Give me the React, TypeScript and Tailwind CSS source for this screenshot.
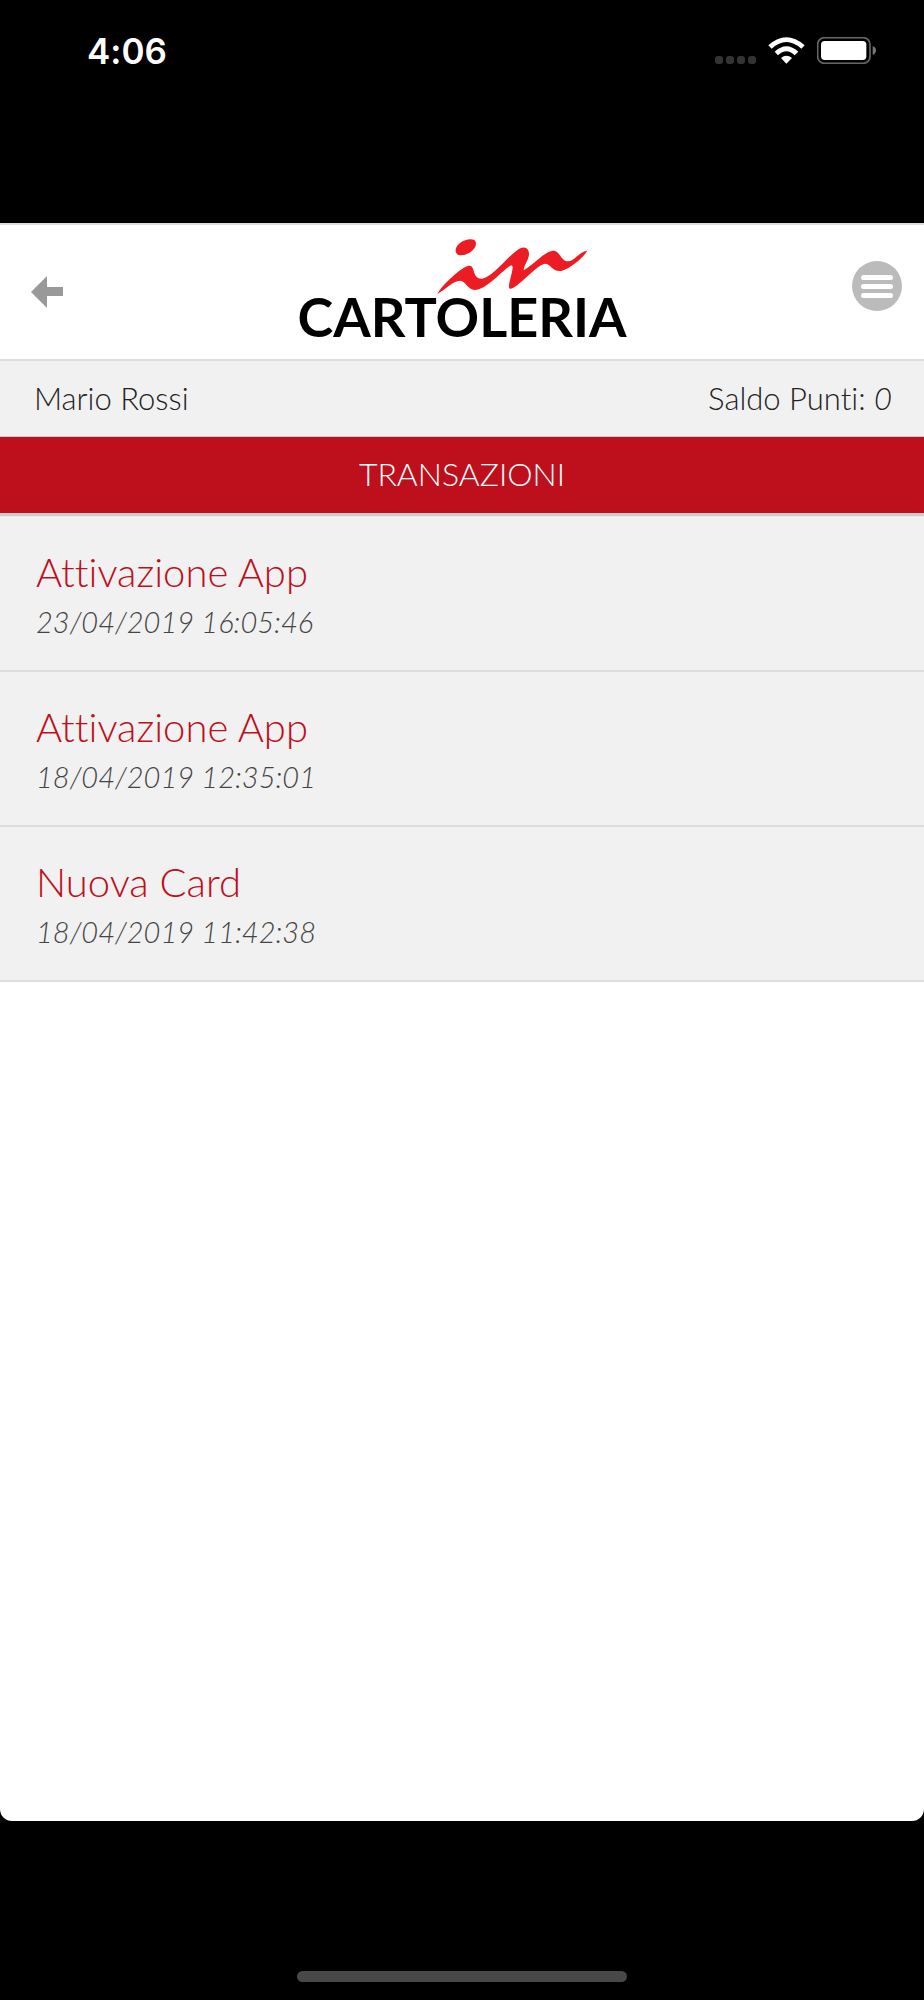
import React from 'react';

interface Transaction {
  id: number;
  title: string;
  date: string;
}

const transactions: Transaction[] = [
  { id: 1, title: 'Attivazione App', date: '23/04/2019 16:05:46' },
  { id: 2, title: 'Attivazione App', date: '18/04/2019 12:35:01' },
  { id: 3, title: 'Nuova Card', date: '18/04/2019 11:42:38' },
];

export default function App() {
  return (
    <div className="flex min-h-screen flex-col bg-black font-['Lato',sans-serif] font-light [font-variant-ligatures:none]">
      <StatusBar />

      <div className="flex flex-1 flex-col overflow-hidden rounded-b-xl bg-white">
        <Header />

        <div className="flex items-center justify-between bg-[#f1f1f1] pt-[15px] pr-8 pb-4 pl-[34px] text-[31px] leading-[44px] text-[#222]">
          <span>Mario Rossi</span>
          <span>
            Saldo Punti: <em>0</em>
          </span>
        </div>

        <h1 className="z-10 border-t border-[#ccc] bg-[#be0f1c] pt-[15px] pb-[17px] text-center text-[32px] leading-[44px] text-white shadow-[0_3px_1px_#ccc]">
          TRANSAZIONI
        </h1>

        <ul className="bg-[#f1f1f1] pt-1">
          {transactions.map((t) => (
            <TransactionRow key={t.id} transaction={t} />
          ))}
        </ul>
      </div>

      <footer className="flex h-[179px] items-end justify-center pb-[18px]">
        <div className="h-[11px] w-[330px] rounded-full bg-[#484848]" />
      </footer>
    </div>
  );
}

function StatusBar() {
  return (
    <div className="flex h-[223px] items-start justify-between pt-7 pr-[47px] pl-[87px]">
      <span className="font-['Inter',sans-serif] text-[35px] leading-[46px] font-semibold text-white">4:06</span>
      <div className="flex items-center gap-3 pt-[9px]">
        {/* No signal */}
        <div className="flex gap-[3px] self-end">
          <i className="size-2 rounded-[3px] bg-[#333]" />
          <i className="size-2 rounded-[3px] bg-[#333]" />
          <i className="size-2 rounded-[3px] bg-[#333]" />
          <i className="size-2 rounded-[3px] bg-[#333]" />
        </div>
        <svg viewBox="0 0 111 81" className="h-[27px] w-[37px] fill-white">
          <path d="M1 25 Q55 -23 110 25 L100 35 Q55 -5 11 35 Z" />
          <path d="M20 44 Q55 11 91 44 L80 55 Q55 31 30 55 Z" />
          <path d="M39 63 Q55 50 72 63 L55 80 Z" />
        </svg>
        <svg viewBox="0 0 180 81" className="h-[27px] w-[60px]">
          <rect x="2" y="2" width="157" height="77" rx="20" fill="none" stroke="#666" strokeWidth="5" />
          <rect x="12" y="12" width="136" height="57" rx="11" fill="#fff" />
          <path d="M167 27 Q177 31 177 40 Q177 50 167 54 Z" fill="#777" />
        </svg>
      </div>
    </div>
  );
}

function Header() {
  return (
    <header className="grid grid-cols-[1fr_auto_1fr] items-center border-y-2 border-[#ddd] bg-white px-[22px]">
      <button type="button" aria-label="Indietro" className="justify-self-start pl-[9px]">
        <svg viewBox="0 0 32 32" className="size-8 fill-[#999]">
          <path d="M0 16 L16 0 V11 H32 V20 H16 V32 Z" />
        </svg>
      </button>

      <Logo />

      <button
        type="button"
        aria-label="Menu"
        className="mt-9 flex size-[50px] flex-col items-center justify-center gap-1 self-start justify-self-end rounded-full bg-[#bbb]"
      >
        <span className="h-[5px] w-8 rounded-full bg-white" />
        <span className="h-[5px] w-8 rounded-full bg-white" />
        <span className="h-[5px] w-8 rounded-full bg-white" />
      </button>
    </header>
  );
}

function Logo() {
  return (
    <div className="flex flex-col items-center pt-3.5 pb-5">
      <svg viewBox="471 72 450 168" className="ml-[100px] h-14 w-[150px] fill-[#ed1c24]">
        <path d="M527 105 C528 88 552 72 573 73 C586 73 590 82 587 92 C581 109 558 122 539 121 C531 119 526 114 527 105 Z" />
        <path d="M472 237 C485 211 545 154 568 152 C586 151 576 192 606 191 C640 188 690 113 723 99 C744 91 752 113 744 131 C739 143 731 155 731 166 C760 150 795 108 820 107 C841 107 842 140 865 139 C885 137 895 112 921 107 C915 125 862 168 840 168 C815 168 812 146 795 146 C770 148 712 222 690 221 C679 219 702 164 697 153 C688 141 625 225 585 225 C560 222 558 198 540 197 C520 197 495 224 472 237 Z" />
      </svg>
      <span className="text-[54px] leading-[44px] font-bold text-black">CARTOLERIA</span>
    </div>
  );
}

function TransactionRow({ transaction }: { transaction: Transaction }) {
  return (
    <li className="border-b-2 border-[#ddd] px-9 pt-7 pb-[26px]">
      <h2 className="text-[40px] leading-[54px] text-[#be0f1c]">{transaction.title}</h2>
      <p className="text-[29px] leading-[45px] text-[#444] italic">{transaction.date}</p>
    </li>
  );
}
